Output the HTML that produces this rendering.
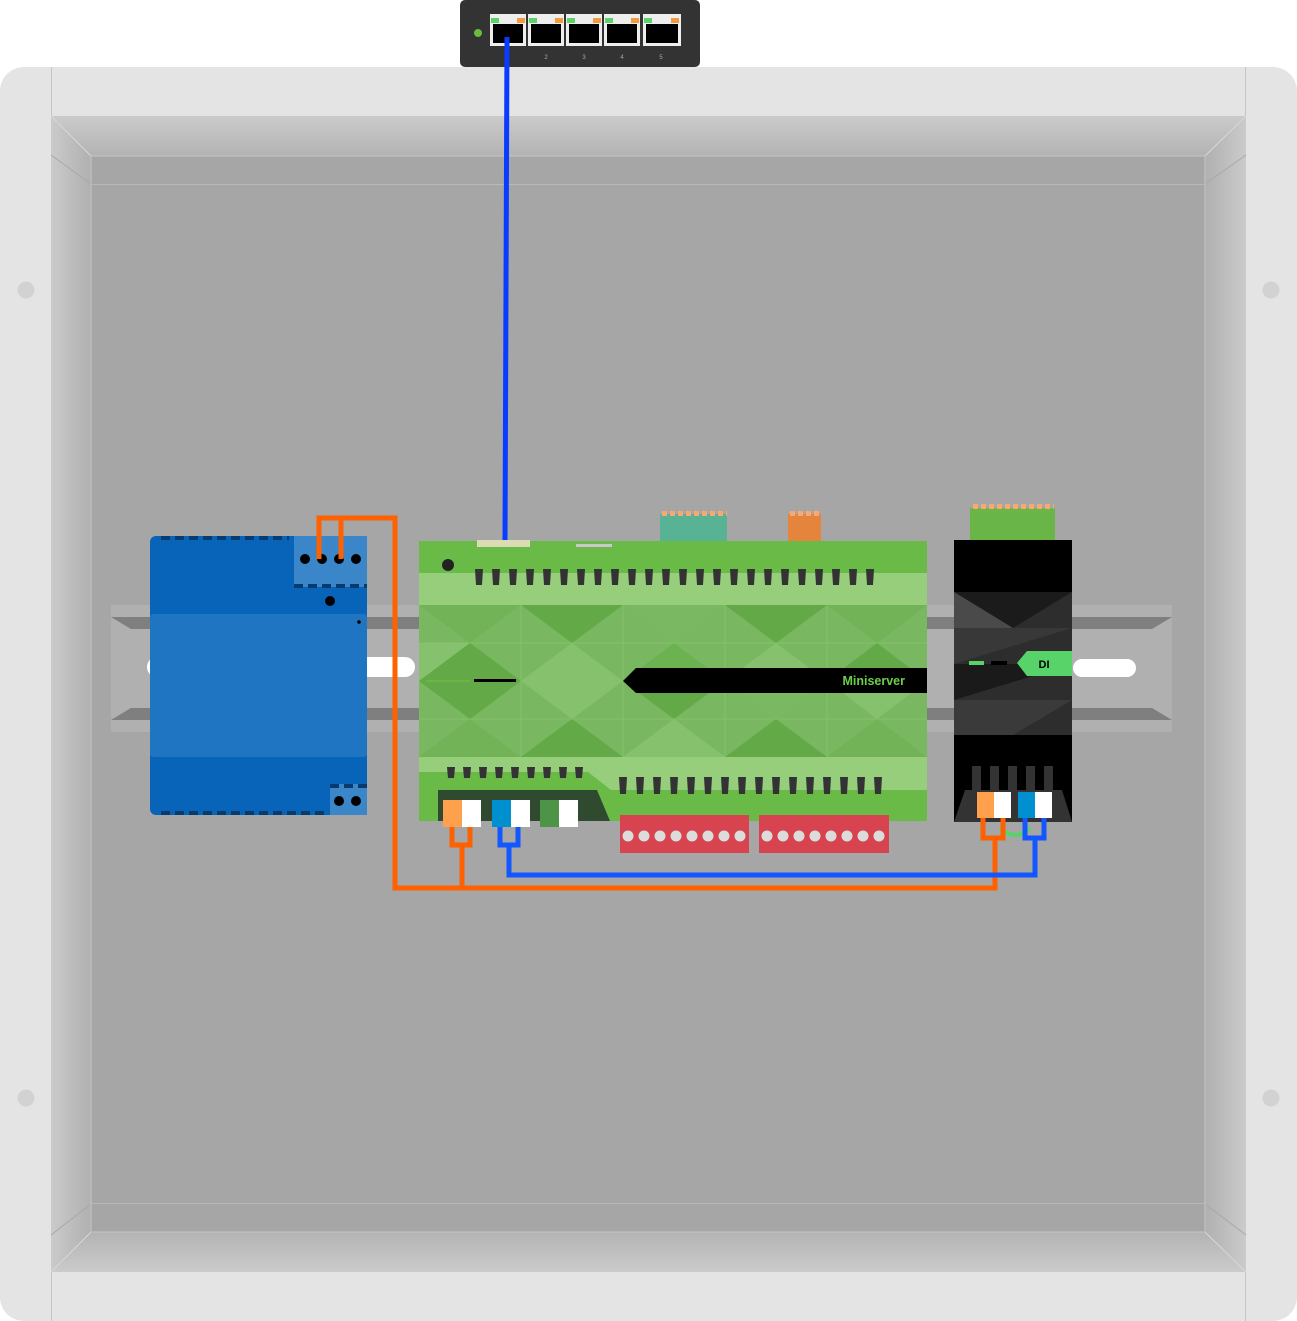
<!DOCTYPE html>
<html><head><meta charset="utf-8"><style>
html,body{margin:0;padding:0;background:#fff;width:1297px;height:1321px;overflow:hidden}
svg{display:block}
</style></head><body>
<svg width="1297" height="1321" viewBox="0 0 1297 1321" xmlns="http://www.w3.org/2000/svg" font-family="Liberation Sans, sans-serif">
<defs>
<linearGradient id="gt" x1="0" y1="0" x2="0" y2="1"><stop offset="0" stop-color="#cbcbcb"/><stop offset="1" stop-color="#b3b3b3"/></linearGradient>
<linearGradient id="gb" x1="0" y1="1" x2="0" y2="0"><stop offset="0" stop-color="#cbcbcb"/><stop offset="1" stop-color="#b3b3b3"/></linearGradient>
<linearGradient id="gl" x1="0" y1="0" x2="1" y2="0"><stop offset="0" stop-color="#cbcbcb"/><stop offset="1" stop-color="#b0b0b0"/></linearGradient>
<linearGradient id="gr" x1="1" y1="0" x2="0" y2="0"><stop offset="0" stop-color="#cbcbcb"/><stop offset="1" stop-color="#b0b0b0"/></linearGradient>
<pattern id="teeth" x="475" y="569" width="17" height="40" patternUnits="userSpaceOnUse"><polygon points="0,0 8,0 7,16 1,16" fill="#333"/></pattern>
<pattern id="teeth2" x="447" y="767" width="16" height="40" patternUnits="userSpaceOnUse"><polygon points="0,0 8,0 7,11 1,11" fill="#333"/></pattern>
<pattern id="teeth3" x="619" y="777" width="17" height="40" patternUnits="userSpaceOnUse"><polygon points="0,0 8,0 7,17 1,17" fill="#333"/></pattern>
<pattern id="rdots" x="620" y="815" width="16" height="60" patternUnits="userSpaceOnUse"><circle cx="8" cy="21" r="5.5" fill="#dcdcdc"/></pattern>
<pattern id="rdots2" x="759" y="815" width="16" height="60" patternUnits="userSpaceOnUse"><circle cx="8" cy="21" r="5.5" fill="#dcdcdc"/></pattern>
<pattern id="odots1" x="661" y="511" width="8" height="8" patternUnits="userSpaceOnUse"><rect x="1" y="0" width="5" height="5" fill="#f8a870"/></pattern>
<pattern id="odots2" x="789" y="511" width="8" height="8" patternUnits="userSpaceOnUse"><rect x="1" y="0" width="5" height="5" fill="#f8a870"/></pattern>
<pattern id="odots3" x="972" y="504" width="8" height="8" patternUnits="userSpaceOnUse"><rect x="1" y="0" width="5" height="5" fill="#f8a870"/></pattern>
<pattern id="dash1" x="161" y="536" width="14" height="6" patternUnits="userSpaceOnUse"><rect x="0" y="0" width="9" height="4" fill="#073a6e"/></pattern>
<pattern id="dash2" x="294" y="584" width="14" height="6" patternUnits="userSpaceOnUse"><rect x="0" y="0" width="9" height="4" fill="#073a6e"/></pattern>
<pattern id="dash3" x="161" y="811" width="14" height="6" patternUnits="userSpaceOnUse"><rect x="0" y="0" width="9" height="4" fill="#073a6e"/></pattern>
<pattern id="dash4" x="330" y="784" width="14" height="6" patternUnits="userSpaceOnUse"><rect x="0" y="0" width="9" height="4" fill="#073a6e"/></pattern>
</defs>

<rect x="0" y="67" width="1297" height="1254" rx="24" fill="#e4e4e4"/>
<line x1="51.5" y1="67" x2="51.5" y2="1321" stroke="#c4c4c4"/>
<line x1="1245.5" y1="67" x2="1245.5" y2="1321" stroke="#c4c4c4"/>
<rect x="51" y="116" width="1195" height="1156" fill="#a6a6a6"/>
<polygon points="51,116 1246,116 1205,156 91,156" fill="url(#gt)"/>
<polygon points="51,1272 1246,1272 1205,1232 91,1232" fill="url(#gb)"/>
<polygon points="51,116 91,156 91,1232 51,1272" fill="url(#gl)"/>
<polygon points="1246,116 1205,156 1205,1232 1246,1272" fill="url(#gr)"/>
<line x1="51" y1="116" x2="91" y2="156" stroke="#d8d8d8"/>
<line x1="1246" y1="116" x2="1205" y2="156" stroke="#d8d8d8"/>
<line x1="51" y1="1272" x2="91" y2="1232" stroke="#d8d8d8"/>
<line x1="1246" y1="1272" x2="1205" y2="1232" stroke="#d8d8d8"/>
<line x1="51" y1="155" x2="91" y2="184" stroke="#a8a8a8"/>
<line x1="1246" y1="155" x2="1205" y2="184" stroke="#a8a8a8"/>
<line x1="51" y1="1235" x2="91" y2="1204" stroke="#a8a8a8"/>
<line x1="1246" y1="1235" x2="1205" y2="1204" stroke="#a8a8a8"/>
<rect x="91" y="156" width="1114" height="1076" fill="none" stroke="#c6c6c6"/>
<line x1="91" y1="184.5" x2="1205" y2="184.5" stroke="#b9b9b9"/>
<line x1="91" y1="1203.5" x2="1205" y2="1203.5" stroke="#b9b9b9"/>
<circle cx="26" cy="290" r="8.5" fill="#d2d2d2"/>
<circle cx="26" cy="1098" r="8.5" fill="#d2d2d2"/>
<circle cx="1271" cy="290" r="8.5" fill="#d2d2d2"/>
<circle cx="1271" cy="1098" r="8.5" fill="#d2d2d2"/>

<rect x="460" y="0" width="240" height="67" rx="5" fill="#333"/>
<circle cx="478" cy="33" r="4" fill="#6abb3b"/>
<g>
<rect x="490" y="14" width="36" height="32" fill="#eee"/><rect x="493" y="24" width="30" height="19" fill="#000"/><rect x="491" y="18" width="8" height="5" fill="#5bd36a"/><rect x="517" y="18" width="8" height="5" fill="#f49a3e"/>
<rect x="528" y="14" width="36" height="32" fill="#eee"/><rect x="531" y="24" width="30" height="19" fill="#000"/><rect x="529" y="18" width="8" height="5" fill="#5bd36a"/><rect x="555" y="18" width="8" height="5" fill="#f49a3e"/>
<rect x="566" y="14" width="36" height="32" fill="#eee"/><rect x="569" y="24" width="30" height="19" fill="#000"/><rect x="567" y="18" width="8" height="5" fill="#5bd36a"/><rect x="593" y="18" width="8" height="5" fill="#f49a3e"/>
<rect x="604" y="14" width="36" height="32" fill="#eee"/><rect x="607" y="24" width="30" height="19" fill="#000"/><rect x="605" y="18" width="8" height="5" fill="#5bd36a"/><rect x="631" y="18" width="8" height="5" fill="#f49a3e"/>
<rect x="643" y="14" width="38" height="32" fill="#eee"/><rect x="646" y="24" width="32" height="19" fill="#000"/><rect x="644" y="18" width="8" height="5" fill="#5bd36a"/><rect x="671" y="18" width="8" height="5" fill="#f49a3e"/>
</g>
<g font-size="6" fill="#aaa" text-anchor="middle"><text x="546" y="59">2</text><text x="584" y="59">3</text><text x="622" y="59">4</text><text x="661" y="59">5</text></g>

<rect x="111" y="605" width="1061" height="127" fill="#b0b0b0"/>
<polygon points="111,617 1172,617 1152,629 131,629" fill="#7f7f7f"/>
<polygon points="111,720 1172,720 1152,708 131,708" fill="#7f7f7f"/>
<rect x="147" y="657" width="268" height="20" rx="10" fill="#fff"/>
<rect x="1073" y="659" width="63" height="18" rx="9" fill="#fff"/>

<rect x="150" y="536" width="217" height="279" rx="6" fill="#0764b9"/>
<rect x="150" y="614" width="217" height="143" rx="3" fill="#2075c2"/>
<rect x="294" y="536" width="73" height="51" fill="#3a86c8"/>
<rect x="161" y="536" width="128" height="4" fill="url(#dash1)"/>
<rect x="294" y="584" width="73" height="4" fill="url(#dash2)"/>
<rect x="161" y="811" width="168" height="4" fill="url(#dash3)"/>
<rect x="330" y="784" width="37" height="31" fill="#3a86c8"/>
<rect x="330" y="784" width="37" height="4" fill="url(#dash4)"/>
<g fill="#000"><circle cx="305" cy="559" r="5"/><circle cx="322" cy="559" r="5"/><circle cx="339" cy="559" r="5"/><circle cx="356" cy="559" r="5"/><circle cx="330" cy="601" r="5"/><circle cx="359" cy="622" r="1.8"/><circle cx="339" cy="801" r="5"/><circle cx="356" cy="801" r="5"/></g>

<rect x="660" y="514" width="67" height="33" fill="#58b394"/>
<rect x="661" y="511" width="66" height="5" fill="url(#odots1)"/>
<rect x="788" y="514" width="33" height="33" fill="#e5853d"/>
<rect x="789" y="511" width="32" height="5" fill="url(#odots2)"/>
<rect x="419" y="541" width="508" height="280" fill="#6aba47"/>
<rect x="477" y="540" width="53" height="7" fill="#dcdcb4"/>
<rect x="576" y="544" width="36" height="3" fill="#c9c9c9"/>
<circle cx="448" cy="565" r="6" fill="#222"/>
<rect x="419" y="573" width="508" height="32" fill="#97ce7c"/>
<rect x="475" y="569" width="408" height="16" fill="url(#teeth)"/>
<rect x="419" y="605" width="508" height="152" fill="#79b860"/>
<g>
<polygon points="419,605 521,605 470,643" fill="#72b358"/>
<polygon points="521,605 623,605 572,643" fill="#63a947"/>
<polygon points="623,605 725,605 674,643" fill="#7ab961"/>
<polygon points="725,605 827,605 776,643" fill="#63a947"/>
<polygon points="827,605 927,605 877,643" fill="#72b358"/>
<polygon points="419,643 470,643 419,681" fill="#86c26d"/>
<polygon points="419,681 521,681 470,643" fill="#63a947"/>
<polygon points="521,681 623,681 572,643" fill="#86c26d"/>
<polygon points="623,681 725,681 674,643" fill="#6db251"/>
<polygon points="725,681 827,681 776,643" fill="#86c26d"/>
<polygon points="827,681 927,681 877,643" fill="#63a947"/>
<polygon points="419,681 521,681 470,719" fill="#63a947"/>
<polygon points="521,681 623,681 572,719" fill="#86c26d"/>
<polygon points="623,681 725,681 674,719" fill="#63a947"/>
<polygon points="725,681 827,681 776,719" fill="#7ab961"/>
<polygon points="827,681 927,681 877,719" fill="#86c26d"/>
<polygon points="419,757 521,757 470,719" fill="#72b358"/>
<polygon points="521,757 623,757 572,719" fill="#63a947"/>
<polygon points="623,757 725,757 674,719" fill="#86c26d"/>
<polygon points="725,757 827,757 776,719" fill="#63a947"/>
<polygon points="827,757 927,757 877,719" fill="#72b358"/>
</g>
<g stroke="#8bc673" stroke-width="1" opacity="0.6"><line x1="419" y1="643" x2="927" y2="643"/><line x1="419" y1="719" x2="927" y2="719"/><line x1="521" y1="605" x2="521" y2="757"/><line x1="623" y1="605" x2="623" y2="757"/><line x1="725" y1="605" x2="725" y2="757"/><line x1="827" y1="605" x2="827" y2="757"/></g>
<polygon points="636,668 927,668 927,693 636,693 623,681" fill="#000"/>
<text x="905" y="685" font-size="12.5" font-weight="bold" fill="#6ccf4a" text-anchor="end">Miniserver</text>
<rect x="426" y="680" width="44" height="2" fill="#6ab547"/>
<rect x="474" y="679" width="42" height="3" fill="#000"/>
<polygon points="419,757 927,757 927,790 611,790 588,772 419,772" fill="#97ce7c"/>
<rect x="447" y="767" width="140" height="11" fill="url(#teeth2)"/>
<rect x="619" y="777" width="264" height="17" fill="url(#teeth3)"/>
<polygon points="438,790 597,790 610,821 438,821" fill="#2f4a2e"/>
<rect x="443" y="800" width="19" height="27" fill="#ffa04d"/><rect x="462" y="800" width="19" height="27" fill="#fff"/>
<rect x="492" y="800" width="19" height="27" fill="#0090d0"/><rect x="511" y="800" width="19" height="27" fill="#fff"/>
<rect x="540" y="800" width="19" height="27" fill="#4d9446"/><rect x="559" y="800" width="19" height="27" fill="#fff"/>
<rect x="620" y="815" width="129" height="38" fill="#d7434f"/>
<rect x="620" y="815" width="129" height="38" fill="url(#rdots)"/>
<rect x="759" y="815" width="130" height="38" fill="#d7434f"/>
<rect x="759" y="815" width="130" height="38" fill="url(#rdots2)"/>

<rect x="970" y="508" width="85" height="37" fill="#6ab547"/>
<rect x="972" y="504" width="82" height="5" fill="url(#odots3)"/>
<rect x="954" y="540" width="118" height="282" fill="#000"/>
<rect x="954" y="592" width="118" height="143" fill="#2d2d2d"/>
<polygon points="954,592 1072,592 1013,628" fill="#1b1b1b"/>
<polygon points="954,592 1013,628 954,628" fill="#4a4a4a"/>
<polygon points="954,628 1072,628 954,664" fill="#383838"/>
<polygon points="954,664 1072,664 954,700" fill="#1a1a1a"/>
<polygon points="954,700 1072,700 1013,735 954,735" fill="#3a3a3a"/>
<polygon points="1027,651 1072,651 1072,676 1027,676 1017,663" fill="#58d36a"/>
<text x="1044" y="668" font-size="11" font-weight="bold" fill="#000" text-anchor="middle">DI</text>
<rect x="969" y="661" width="15" height="4" fill="#58d36a"/>
<rect x="991" y="661" width="16" height="4" fill="#000"/>
<g fill="#333"><rect x="972" y="766" width="9" height="26"/><rect x="990" y="766" width="9" height="26"/><rect x="1008" y="766" width="9" height="26"/><rect x="1026" y="766" width="9" height="26"/><rect x="1044" y="766" width="9" height="26"/></g>
<polygon points="965,790 1062,790 1072,822 954,822" fill="#333"/>
<rect x="977" y="792" width="17" height="26" fill="#ffa04d"/><rect x="994" y="792" width="17" height="26" fill="#fff"/>
<rect x="1018" y="792" width="17" height="26" fill="#0090d0"/><rect x="1035" y="792" width="17" height="26" fill="#fff"/>
<path d="M1000 828 Q1015 842 1030 828" stroke="#58d36a" stroke-width="4" fill="none"/>

<g fill="none" stroke-width="5" stroke-linejoin="miter">
<path d="M507 37 L505 540" stroke="#0a3cff"/>
<path d="M319 559 V518 H341 V559 M341 518 H395 V888 H995 V838 M983 818 V838 H1003 V818 M462 888 V845 M452 827 V845 H470 V827" stroke="#ff6000"/>
<path d="M509 845 V875 H1035 V838 M1025 818 V838 H1044 V818 M500 827 V845 H518 V827" stroke="#1257ff"/>
</g>
</svg>
</body></html>
